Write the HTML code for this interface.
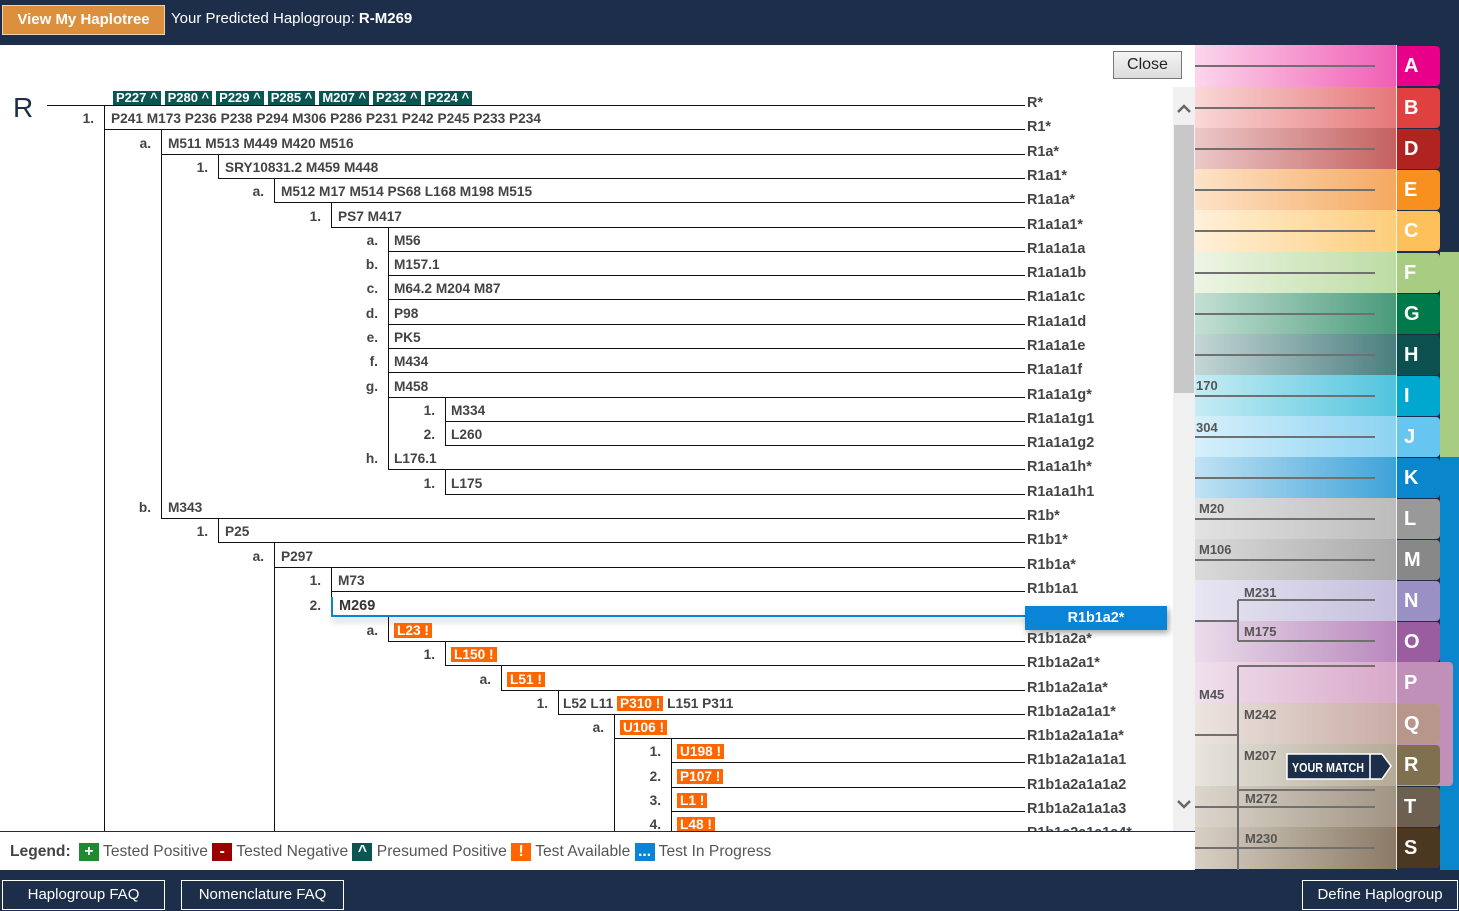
<!DOCTYPE html>
<html><head><meta charset="utf-8"><style>
*{margin:0;padding:0;box-sizing:border-box}
body{width:1459px;height:911px;position:relative;overflow:hidden;background:#fff;font-family:"Liberation Sans",Arial,sans-serif}
.a{position:absolute}
.h{position:absolute;height:1px;background:#111;width:auto}
.v{position:absolute;width:1px;background:#111}
.n{position:absolute;width:30px;text-align:right;font:bold 13.7px/16px "Liberation Sans",sans-serif;color:#444}
.t{position:absolute;font:bold 13.7px/16px "Liberation Sans",sans-serif;color:#444;white-space:nowrap}
.r{position:absolute;left:1027px;font:bold 14.4px/16px "Liberation Sans",sans-serif;color:#444;white-space:nowrap}
.tg{display:inline-block;background:#0b5652;color:#fff;font:bold 13px/14px "Liberation Sans",sans-serif;padding:0 3px;margin-right:4px}
.o{display:inline-block;background:#f60;color:#fff;padding:0 3px;line-height:15px}
.band{position:absolute;left:1195px;width:202px;height:42px}
.band i{position:absolute;left:0;width:180px;top:20px;height:2px;background:#707070}
.tab{position:absolute;left:1397px;width:43px;height:40px;color:#fff;font:bold 20px/40px "Liberation Sans",sans-serif;text-align:left;padding-left:7px;border-radius:0 4px 4px 0}
.ml{position:absolute;font:bold 13px/14px "Liberation Sans",sans-serif;color:#555}
.fb{position:absolute;top:880px;height:30px;border:1px solid #fff;color:#fff;font:15px/28px "Liberation Sans",sans-serif;text-align:center;background:#1c2e4a}
</style></head><body>
<div class="a" style="left:0;top:0;width:1459px;height:45px;background:#1c2e4a"></div>
<div class="a" style="left:2px;top:5px;width:163px;height:30px;background:#dc8f3c;border:1px solid #f3d2a8;color:#fff;font:bold 15px/28px 'Liberation Sans',sans-serif;text-align:center">View My Haplotree</div>
<div class="a" style="left:171px;top:10px;color:#fff;font:15px/18px 'Liberation Sans',sans-serif">Your Predicted Haplogroup: <b>R-M269</b></div>

<div class="a" style="left:0;top:45px;width:1173px;height:787px;overflow:hidden">
<div class="a" style="left:0;top:-45px;width:1173px;height:911px">
<div class="a" style="left:13px;top:93px;font:28px/30px 'Liberation Sans',sans-serif;color:#1c2e4a">R</div>
<div class="a" style="left:113px;top:89px;white-space:nowrap"><span class="tg">P227 ^</span><span class="tg">P280 ^</span><span class="tg">P229 ^</span><span class="tg">P285 ^</span><span class="tg">M207 ^</span><span class="tg">P232 ^</span><span class="tg">P224 ^</span></div>
<div class="h" style="left:47px;top:105px;width:978px"></div><div class="r" style="top:95px">R*</div>
<div class="v" style="left:104px;top:105px;height:730px"></div>

<div class="h" style="left:104px;top:129px;width:921px"></div><div class="n" style="left:64px;top:111px">1.</div><div class="t" style="left:111px;top:111px">P241 M173 P236 P238 P294 M306 P286 P231 P242 P245 P233 P234</div><div class="r" style="top:119px">R1*</div>

<div class="h" style="left:161px;top:154px;width:864px"></div><div class="v" style="left:161px;top:129px;height:25px"></div><div class="n" style="left:121px;top:136px">a.</div><div class="t" style="left:168px;top:136px">M511 M513 M449 M420 M516</div><div class="r" style="top:144px">R1a*</div>

<div class="h" style="left:218px;top:178px;width:807px"></div><div class="v" style="left:218px;top:154px;height:24px"></div><div class="n" style="left:178px;top:160px">1.</div><div class="t" style="left:225px;top:160px">SRY10831.2 M459 M448</div><div class="r" style="top:168px">R1a1*</div>

<div class="h" style="left:274px;top:202px;width:751px"></div><div class="v" style="left:274px;top:178px;height:24px"></div><div class="n" style="left:234px;top:184px">a.</div><div class="t" style="left:281px;top:184px">M512 M17 M514 PS68 L168 M198 M515</div><div class="r" style="top:192px">R1a1a*</div>

<div class="h" style="left:331px;top:227px;width:694px"></div><div class="v" style="left:331px;top:202px;height:25px"></div><div class="n" style="left:291px;top:209px">1.</div><div class="t" style="left:338px;top:209px">PS7 M417</div><div class="r" style="top:217px">R1a1a1*</div>

<div class="v" style="left:388px;top:227px;height:242px"></div>
<div class="h" style="left:388px;top:251px;width:637px"></div><div class="n" style="left:348px;top:233px">a.</div><div class="t" style="left:394px;top:233px">M56</div><div class="r" style="top:241px">R1a1a1a</div>
<div class="h" style="left:388px;top:275px;width:637px"></div><div class="n" style="left:348px;top:257px">b.</div><div class="t" style="left:394px;top:257px">M157.1</div><div class="r" style="top:265px">R1a1a1b</div>
<div class="h" style="left:388px;top:299px;width:637px"></div><div class="n" style="left:348px;top:281px">c.</div><div class="t" style="left:394px;top:281px">M64.2 M204 M87</div><div class="r" style="top:289px">R1a1a1c</div>
<div class="h" style="left:388px;top:324px;width:637px"></div><div class="n" style="left:348px;top:306px">d.</div><div class="t" style="left:394px;top:306px">P98</div><div class="r" style="top:314px">R1a1a1d</div>
<div class="h" style="left:388px;top:348px;width:637px"></div><div class="n" style="left:348px;top:330px">e.</div><div class="t" style="left:394px;top:330px">PK5</div><div class="r" style="top:338px">R1a1a1e</div>
<div class="h" style="left:388px;top:372px;width:637px"></div><div class="n" style="left:348px;top:354px">f.</div><div class="t" style="left:394px;top:354px">M434</div><div class="r" style="top:362px">R1a1a1f</div>
<div class="h" style="left:388px;top:397px;width:637px"></div><div class="n" style="left:348px;top:379px">g.</div><div class="t" style="left:394px;top:379px">M458</div><div class="r" style="top:387px">R1a1a1g*</div>
<div class="v" style="left:445px;top:397px;height:48px"></div>
<div class="h" style="left:445px;top:421px;width:580px"></div><div class="n" style="left:405px;top:403px">1.</div><div class="t" style="left:451px;top:403px">M334</div><div class="r" style="top:411px">R1a1a1g1</div>
<div class="h" style="left:445px;top:445px;width:580px"></div><div class="n" style="left:405px;top:427px">2.</div><div class="t" style="left:451px;top:427px">L260</div><div class="r" style="top:435px">R1a1a1g2</div>
<div class="h" style="left:388px;top:469px;width:637px"></div><div class="n" style="left:348px;top:451px">h.</div><div class="t" style="left:394px;top:451px">L176.1</div><div class="r" style="top:459px">R1a1a1h*</div>
<div class="v" style="left:445px;top:469px;height:25px"></div>
<div class="h" style="left:445px;top:494px;width:580px"></div><div class="n" style="left:405px;top:476px">1.</div><div class="t" style="left:451px;top:476px">L175</div><div class="r" style="top:484px">R1a1a1h1</div>

<div class="v" style="left:161px;top:129px;height:389px"></div>
<div class="h" style="left:161px;top:518px;width:864px"></div><div class="n" style="left:121px;top:500px">b.</div><div class="t" style="left:168px;top:500px">M343</div><div class="r" style="top:508px">R1b*</div>
<div class="v" style="left:218px;top:518px;height:24px"></div>
<div class="h" style="left:218px;top:542px;width:807px"></div><div class="n" style="left:178px;top:524px">1.</div><div class="t" style="left:225px;top:524px">P25</div><div class="r" style="top:532px">R1b1*</div>
<div class="v" style="left:274px;top:542px;height:300px"></div>
<div class="h" style="left:274px;top:567px;width:751px"></div><div class="n" style="left:234px;top:549px">a.</div><div class="t" style="left:281px;top:549px">P297</div><div class="r" style="top:557px">R1b1a*</div>
<div class="v" style="left:331px;top:567px;height:50px"></div>
<div class="h" style="left:331px;top:591px;width:694px"></div><div class="n" style="left:291px;top:573px">1.</div><div class="t" style="left:338px;top:573px">M73</div><div class="r" style="top:581px">R1b1a1</div>
<div class="a" style="left:331px;top:615px;width:836px;height:2px;background:#0a84d6;box-shadow:0 4px 7px rgba(0,0,0,.35)"></div>
<div class="v" style="left:331px;top:597px;height:19px;background:#0a84d6;width:2px"></div>
<div class="n" style="left:291px;top:598px">2.</div><div class="t" style="left:339px;top:598px;font-size:14.5px;color:#333">M269</div>
<div class="a" style="left:1025px;top:606px;width:142px;height:24px;background:#0a84d6;color:#fff;font:bold 14.4px/24px 'Liberation Sans',sans-serif;text-align:center;box-shadow:2px 3px 6px rgba(0,0,0,.35)">R1b1a2*</div>

<div class="v" style="left:388px;top:617px;height:24px"></div>
<div class="h" style="left:388px;top:641px;width:637px"></div><div class="n" style="left:348px;top:623px">a.</div><div class="t" style="left:394px;top:623px"><span class="o">L23 !</span></div><div class="r" style="top:631px">R1b1a2a*</div>
<div class="v" style="left:445px;top:641px;height:24px"></div>
<div class="h" style="left:445px;top:665px;width:580px"></div><div class="n" style="left:405px;top:647px">1.</div><div class="t" style="left:451px;top:647px"><span class="o">L150 !</span></div><div class="r" style="top:655px">R1b1a2a1*</div>
<div class="v" style="left:501px;top:665px;height:25px"></div>
<div class="h" style="left:501px;top:690px;width:524px"></div><div class="n" style="left:461px;top:672px">a.</div><div class="t" style="left:507px;top:672px"><span class="o">L51 !</span></div><div class="r" style="top:680px">R1b1a2a1a*</div>
<div class="v" style="left:558px;top:690px;height:24px"></div>
<div class="h" style="left:558px;top:714px;width:467px"></div><div class="n" style="left:518px;top:696px">1.</div><div class="t" style="left:563px;top:696px">L52 L11 <span class="o">P310 !</span> L151 P311</div><div class="r" style="top:704px">R1b1a2a1a1*</div>
<div class="v" style="left:614px;top:714px;height:130px"></div>
<div class="h" style="left:614px;top:738px;width:411px"></div><div class="n" style="left:574px;top:720px">a.</div><div class="t" style="left:620px;top:720px"><span class="o">U106 !</span></div><div class="r" style="top:728px">R1b1a2a1a1a*</div>
<div class="v" style="left:671px;top:738px;height:100px"></div>
<div class="h" style="left:671px;top:762px;width:354px"></div><div class="n" style="left:631px;top:744px">1.</div><div class="t" style="left:677px;top:744px"><span class="o">U198 !</span></div><div class="r" style="top:752px">R1b1a2a1a1a1</div>
<div class="h" style="left:671px;top:787px;width:354px"></div><div class="n" style="left:631px;top:769px">2.</div><div class="t" style="left:677px;top:769px"><span class="o">P107 !</span></div><div class="r" style="top:777px">R1b1a2a1a1a2</div>
<div class="h" style="left:671px;top:811px;width:354px"></div><div class="n" style="left:631px;top:793px">3.</div><div class="t" style="left:677px;top:793px"><span class="o">L1 !</span></div><div class="r" style="top:801px">R1b1a2a1a1a3</div>
<div class="n" style="left:631px;top:817px">4.</div><div class="t" style="left:677px;top:817px"><span class="o">L48 !</span></div><div class="r" style="top:825px">R1b1a2a1a1a4*</div>
</div></div>

<div class="a" style="left:1113px;top:51px;width:69px;height:28px;border:1px solid #777;background:linear-gradient(#f4f4f4,#dcdcdc);font:16px/26px 'Liberation Sans',sans-serif;text-align:center;color:#222">Close</div>
<div class="a" style="left:1173px;top:87px;width:22px;height:745px;background:#f0f0f0"></div>
<div class="a" style="left:1174px;top:125px;width:20px;height:268px;background:#c8c8c8"></div>
<svg class="a" style="left:1176px;top:102px" width="16" height="12"><path d="M2 10 L8 4 L14 10" stroke="#666" stroke-width="2.5" fill="none"/></svg>
<svg class="a" style="left:1176px;top:798px" width="16" height="12"><path d="M2 3 L8 9 L14 3" stroke="#666" stroke-width="2.5" fill="none"/></svg>

<div class="a" style="left:0;top:831px;width:1195px;height:1px;background:#1c2e4a"></div>
<div class="a" style="left:10px;top:843px;font:15.6px/18px 'Liberation Sans',sans-serif;color:#555;white-space:nowrap"><b style="color:#444">Legend:</b> <span style="display:inline-block;width:20px;height:18px;background:#1e8a32;color:#fff;text-align:center;font-weight:bold;vertical-align:top;margin-left:4px">+</span> Tested Positive <span style="display:inline-block;width:20px;height:18px;background:#9a0000;color:#fff;text-align:center;font-weight:bold;vertical-align:top">-</span> Tested Negative <span style="display:inline-block;width:20px;height:18px;background:#0b5652;color:#fff;text-align:center;font-weight:bold;vertical-align:top">^</span> Presumed Positive <span style="display:inline-block;width:20px;height:18px;background:#f60;color:#fff;text-align:center;font-weight:bold;vertical-align:top">!</span> Test Available <span style="display:inline-block;width:20px;height:18px;background:#0a84d6;color:#fff;text-align:center;font-weight:bold;vertical-align:top">...</span> Test In Progress</div>

<div class="a" style="left:1195px;top:45px;width:264px;height:825px;background:#1c2e4a"></div>
<div class="a" style="left:1440px;top:252px;width:19px;height:205px;background:#a8cd82"></div>
<div class="a" style="left:1440px;top:457px;width:19px;height:413px;background:#0a87cc"></div>
<div class="band" style="top:45px;background:linear-gradient(90deg,#fcd6ec,#f05db4)"><i></i></div>
<div class="band" style="top:87px;background:linear-gradient(90deg,#fad7d7,#e57777)"><i></i></div>
<div class="band" style="top:128px;background:linear-gradient(90deg,#ecc8c8,#c46060)"><i></i></div>
<div class="band" style="top:169px;background:linear-gradient(90deg,#fde3c8,#f5a860)"><i></i></div>
<div class="band" style="top:210px;background:linear-gradient(90deg,#fff0da,#fdcd7a)"><i></i></div>
<div class="band" style="top:252px;background:linear-gradient(90deg,#eef5e4,#bcdca4)"><i></i></div>
<div class="band" style="top:293px;background:linear-gradient(90deg,#c4e0d4,#4a9a7a)"><i></i></div>
<div class="band" style="top:334px;background:linear-gradient(90deg,#c4d6d6,#4a7e7e)"><i></i></div>
<div class="band" style="top:375px;background:linear-gradient(90deg,#c6ecf4,#50c4de)"><i></i></div>
<div class="band" style="top:416px;background:linear-gradient(90deg,#d6f0fa,#8cd2f2)"><i></i></div>
<div class="band" style="top:457px;background:linear-gradient(90deg,#c0e2f4,#3ea2d8)"><i></i></div>
<div class="band" style="top:498px;background:linear-gradient(90deg,#e2e2e2,#bcbcbc)"><i></i></div>
<div class="band" style="top:539px;background:linear-gradient(90deg,#dadada,#aaa)"><i></i></div>
<div class="band" style="top:580px;background:linear-gradient(90deg,#e8e6f2,#c4bedc)"></div>
<div class="band" style="top:621px;background:linear-gradient(90deg,#eadcea,#b888bc)"></div>
<div class="band" style="top:662px;background:linear-gradient(90deg,#f0e0ec,#d8a8c8)"></div>
<div class="band" style="top:703px;background:linear-gradient(90deg,#ece4e0,#c8aca4)"></div>
<div class="band" style="top:744px;background:linear-gradient(90deg,#e6e4de,#b4aa96)"></div>
<div class="band" style="top:786px;background:linear-gradient(90deg,#ddd6cc,#a09484)"><i></i></div>
<div class="band" style="top:827px;background:linear-gradient(90deg,#d8d0c4,#8a7a66)"><i></i></div>
<div class="a" style="left:1396px;top:45px;width:1px;height:825px;background:#fff;opacity:.8"></div>
<div class="a" style="left:1397px;top:662px;width:56px;height:124px;background:#c090b8;border-radius:0 4px 4px 0"></div>
<div class="tab" style="top:46px;background:#e8008a">A</div>
<div class="tab" style="top:88px;background:#e04040">B</div>
<div class="tab" style="top:129px;background:#b02320">D</div>
<div class="tab" style="top:170px;background:#f7901e">E</div>
<div class="tab" style="top:211px;background:#fdc05a">C</div>
<div class="tab" style="top:253px;background:#a8cd82">F</div>
<div class="tab" style="top:294px;background:#007a4a">G</div>
<div class="tab" style="top:335px;background:#0d5050">H</div>
<div class="tab" style="top:376px;background:#00a8d0">I</div>
<div class="tab" style="top:417px;background:#66c6f0">J</div>
<div class="tab" style="top:458px;background:#0a87cc">K</div>
<div class="tab" style="top:499px;background:#999">L</div>
<div class="tab" style="top:540px;background:#888">M</div>
<div class="tab" style="top:581px;background:#9a90c4">N</div>
<div class="tab" style="top:622px;background:#9a5ea0">O</div>
<div class="tab" style="top:663px;background:#c090b8">P</div>
<div class="tab" style="top:704px;background:#b8968c">Q</div>
<div class="tab" style="top:745px;background:#807050">R</div>
<div class="tab" style="top:787px;background:#6e6050">T</div>
<div class="tab" style="top:828px;background:#4a3820">S</div>
<svg class="a" style="left:1195px;top:45px" width="200" height="825">
<g stroke="#707070" stroke-width="2" fill="none">
<path d="M0 576 H43 M43 555 V596 M43 555 H180 M43 596 H180"/>
<path d="M0 690 H43 M43 621 V869 M43 621 H180 M43 745 H180 M43 869 H92"/>
</g></svg>
<div class="ml" style="left:1196px;top:379px">170</div>
<div class="ml" style="left:1196px;top:421px">304</div>
<div class="ml" style="left:1199px;top:502px">M20</div>
<div class="ml" style="left:1199px;top:543px">M106</div>
<div class="ml" style="left:1244px;top:586px">M231</div>
<div class="ml" style="left:1244px;top:625px">M175</div>
<div class="ml" style="left:1199px;top:688px">M45</div>
<div class="ml" style="left:1244px;top:708px">M242</div>
<div class="ml" style="left:1244px;top:749px">M207</div>
<div class="ml" style="left:1245px;top:792px">M272</div>
<div class="ml" style="left:1245px;top:832px">M230</div>
<svg class="a" style="left:1286px;top:753px" width="107" height="27"><path d="M1 1 H96 L105 13 L96 26 H1 Z" fill="#1c2e4a" stroke="#fff" stroke-width="1.5"/><path d="M84 1 V26" stroke="#fff" stroke-width="1.5"/><text x="42" y="19" fill="#fff" font-family="Liberation Sans" font-weight="bold" font-size="13" text-anchor="middle" textLength="72" lengthAdjust="spacingAndGlyphs">YOUR MATCH</text></svg>

<div class="a" style="left:0;top:870px;width:1459px;height:41px;background:#1c2e4a"></div>
<div class="fb" style="left:2px;width:163px">Haplogroup FAQ</div>
<div class="fb" style="left:181px;width:163px">Nomenclature FAQ</div>
<div class="fb" style="left:1302px;width:156px">Define Haplogroup</div>
</body></html>
